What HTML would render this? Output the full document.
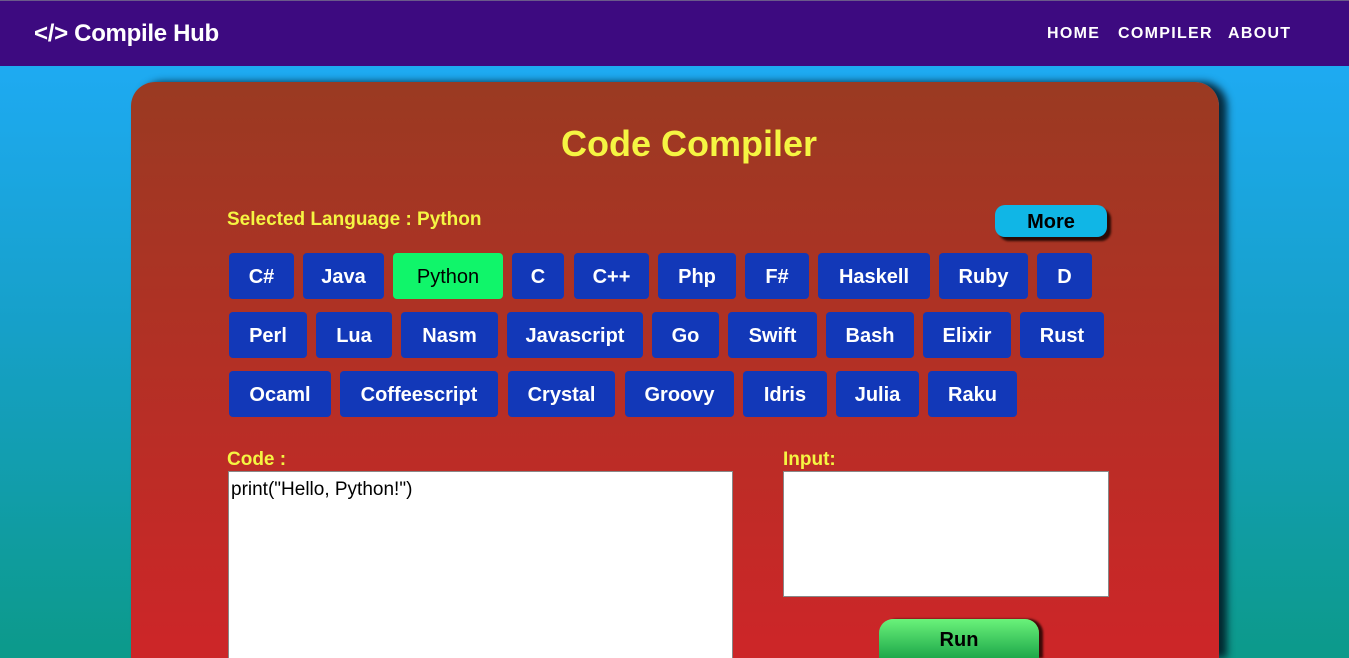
<!DOCTYPE html>
<html style="width:1349px;height:658px;overflow:hidden"><head><meta charset="utf-8"><style>
*{margin:0;padding:0;box-sizing:border-box}
body{width:1349px;height:658px;overflow:hidden;position:relative;font-family:"Liberation Sans",sans-serif;background:linear-gradient(#1eaaf2 66px,#16a0c8 330px,#0c9a8a 658px)}
.nav{position:absolute;left:0;top:0;width:1349px;height:66px;background:#3d0a80;border-top:1px solid #6a5a8a}
.logo{position:absolute;left:34px;top:19px;color:#fff;font-weight:bold;font-size:24px;letter-spacing:-0.3px}
.links{position:absolute;top:24px;color:#fff;font-weight:bold;font-size:16px;letter-spacing:1.3px}
.card{position:absolute;left:131px;top:82px;width:1088px;height:576px;border-radius:24px 24px 0 0;background:linear-gradient(#9a3a22,#cc2628 560px);box-shadow:8px 0 8px rgba(0,20,30,.85)}
.t{position:absolute;font-weight:bold;color:#f5f542}
.b{position:absolute;height:46px;background:#1238b8;color:#fff;font-weight:bold;font-size:20px;border-radius:4px;display:flex;align-items:center;justify-content:center;padding-top:3px}
.ta{position:absolute;background:#fff;border:1px solid #888}
</style></head><body>
<div class="nav">
<div class="logo">&lt;/&gt; Compile Hub</div>
<div class="links" style="left:1047px">HOME</div>
<div class="links" style="left:1118px">COMPILER</div>
<div class="links" style="left:1228px">ABOUT</div>
</div>
<div class="card"></div>
<div class="t" style="left:0;width:1378px;text-align:center;top:123px;font-size:36px">Code Compiler</div>
<div class="t" style="left:227px;top:209px;font-size:19px">Selected Language : Python</div>
<div style="position:absolute;left:995px;top:205px;width:112px;height:32px;background:#10b6e6;border-radius:10px;box-shadow:4px 4px 2px #2a0a05;font-weight:bold;font-size:20px;display:flex;align-items:center;justify-content:center;padding-top:3px;color:#000">More</div>

<div class="b" style="left:229px;top:253px;width:65px">C#</div>
<div class="b" style="left:303px;top:253px;width:81px">Java</div>
<div class="b" style="left:393px;top:253px;width:110px;background:#10f56a;color:#000;font-weight:normal">Python</div>
<div class="b" style="left:512px;top:253px;width:52px">C</div>
<div class="b" style="left:574px;top:253px;width:75px">C++</div>
<div class="b" style="left:658px;top:253px;width:78px">Php</div>
<div class="b" style="left:745px;top:253px;width:64px">F#</div>
<div class="b" style="left:818px;top:253px;width:112px">Haskell</div>
<div class="b" style="left:939px;top:253px;width:89px">Ruby</div>
<div class="b" style="left:1037px;top:253px;width:55px">D</div>

<div class="b" style="left:229px;top:312px;width:78px">Perl</div>
<div class="b" style="left:316px;top:312px;width:76px">Lua</div>
<div class="b" style="left:401px;top:312px;width:97px">Nasm</div>
<div class="b" style="left:507px;top:312px;width:136px">Javascript</div>
<div class="b" style="left:652px;top:312px;width:67px">Go</div>
<div class="b" style="left:728px;top:312px;width:89px">Swift</div>
<div class="b" style="left:826px;top:312px;width:88px">Bash</div>
<div class="b" style="left:923px;top:312px;width:88px">Elixir</div>
<div class="b" style="left:1020px;top:312px;width:84px">Rust</div>

<div class="b" style="left:229px;top:371px;width:102px">Ocaml</div>
<div class="b" style="left:340px;top:371px;width:158px">Coffeescript</div>
<div class="b" style="left:508px;top:371px;width:107px">Crystal</div>
<div class="b" style="left:625px;top:371px;width:109px">Groovy</div>
<div class="b" style="left:743px;top:371px;width:84px">Idris</div>
<div class="b" style="left:836px;top:371px;width:83px">Julia</div>
<div class="b" style="left:928px;top:371px;width:89px">Raku</div>

<div class="t" style="left:227px;top:449px;font-size:19px">Code :</div>
<div class="t" style="left:783px;top:449px;font-size:19px">Input:</div>
<div class="ta" style="left:228px;top:471px;width:505px;height:187px;border-bottom:none;font-size:19px;padding:7px 2px;color:#000">print("Hello, Python!")</div>
<div class="ta" style="left:783px;top:471px;width:326px;height:126px"></div>
<div style="position:absolute;left:879px;top:619px;width:160px;height:39px;border-radius:14px 14px 0 0;background:linear-gradient(#6af27a,#1ea84a);box-shadow:4px 0 2px #3a0a08;font-weight:bold;font-size:20px;display:flex;align-items:center;justify-content:center;padding-top:3px;color:#000">Run</div>
</body></html>
